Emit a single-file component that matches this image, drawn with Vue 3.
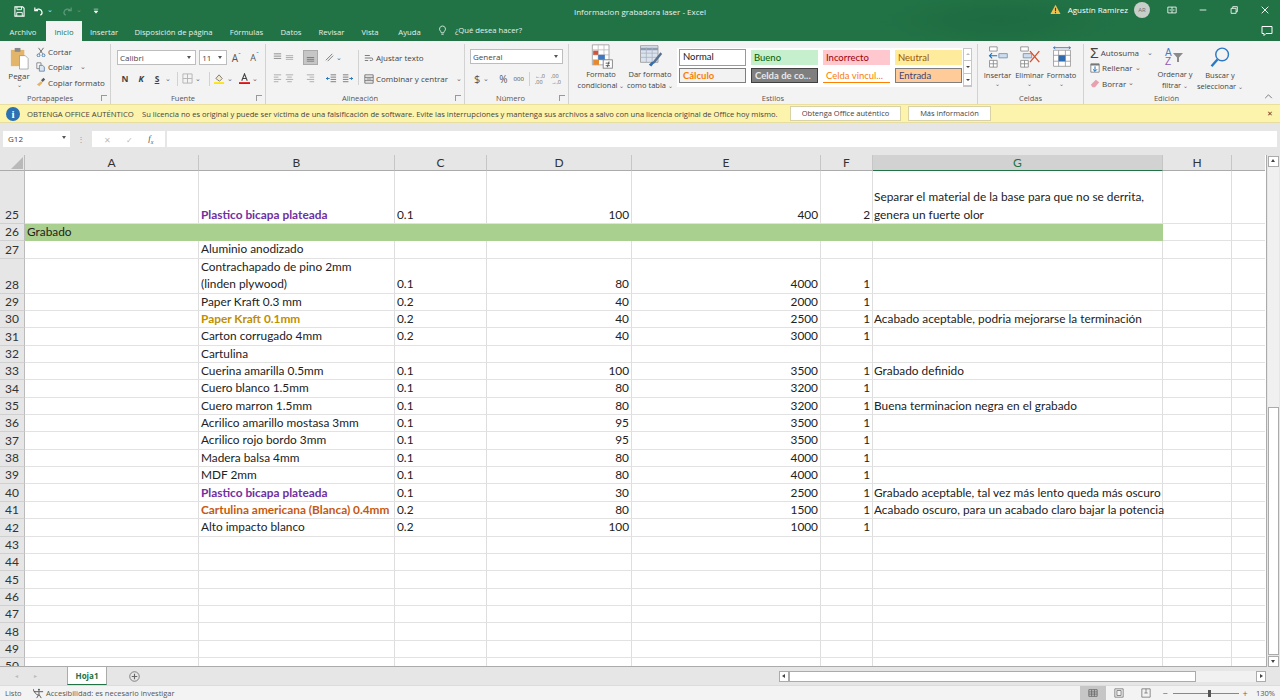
<template>
  <div class="app">
    <div class="titlebar">
      <div class="qat">
        <svg class="ic save" viewBox="0 0 12 12"><path d="M1 1h8.500L11 2.500V11H1z" fill="none" stroke="#fff" stroke-width="1.200"/><path d="M3.200 1v3h5V1M3 11V7h6v4" fill="none" stroke="#fff"/></svg>
        <svg class="ic undo" viewBox="0 0 12 12"><path d="M2 1.500v3.500h3.500M2.300 5C4.500 2.500 9 3 9.800 6.500c.3 1.500-.5 3-1.800 3.500" fill="none" stroke="#fff" stroke-width="1.300"/></svg>
        <span class="caret white">⌄</span>
        <svg class="ic redo" viewBox="0 0 12 12"><path d="M10 1.500v3.500H6.500M9.700 5C7.500 2.500 3 3 2.200 6.500c-.3 1.500.5 3 1.800 3.500" fill="none" stroke="#5d9a7a" stroke-width="1.300"/></svg>
        <span class="caret dim">⌄</span>
        <svg class="ic custom" viewBox="0 0 8 8"><path d="M1 1.500h6M1.500 4h5L4 7z" fill="#fff" stroke="#fff" stroke-width=".7"/></svg>
      </div>
      <div class="doc-title">Informacion grabadora laser  -  Excel</div>
      <div class="account">
        <svg class="warn" viewBox="0 0 12 12"><path d="M6 .8 11.500 11H.5z" fill="#f3c04a"/><path d="M5.400 4h1.200v4H5.400zM5.400 8.800h1.200v1.200H5.400z" fill="#3a3a3a"/></svg>
        <span class="user">Agustín Ramirez</span>
        <span class="avatar">AR</span>
        <svg class="win-ic first" viewBox="0 0 12 12"><path d="M1 2.500h10v7H1zM6 2.500v7M3 6h2M7 6h2" fill="none" stroke="#fff"/></svg>
        <svg class="win-ic" viewBox="0 0 12 12"><path d="M2 6h8" stroke="#fff"/></svg>
        <svg class="win-ic" viewBox="0 0 12 12"><path d="M2.500 4h6v6h-6zM4.500 4V2h5.500v6H8.500" fill="none" stroke="#fff"/></svg>
        <svg class="win-ic" viewBox="0 0 12 12"><path d="m2 2 8 8M10 2l-8 8" stroke="#fff" stroke-width="1.100"/></svg>
      </div>
    </div>

    <div class="tabsbar">
      <span v-for="t in tabs" :key="t.name" class="tab" :class="{ active: t.name === 'Inicio' }" :style="{ width: t.w + 'px' }">{{ t.name }}</span>
      <svg class="bulb" viewBox="0 0 12 14"><path d="M6 1a4 4 0 0 0-2.500 7.100c.6.600.7 1.200.8 2h3.400c.1-.8.2-1.400.8-2A4 4 0 0 0 6 1zM4.500 12h3" fill="none" stroke="#fff"/></svg>
      <span class="tell">¿Qué desea hacer?</span>
      <svg class="comment" viewBox="0 0 12 12"><path d="M1 1.500h10v7H5L3 10.500v-2H1z" fill="none" stroke="#fff"/></svg>
    </div>

    <div class="ribbon">
      <section class="group g-clip">
        <div class="group-body">
          <div class="big pegar">
            <svg class="paste" viewBox="0 0 20 24"><rect x="1" y="3" width="14" height="17" fill="#e3b56b"/><rect x="5" y="1" width="6" height="4" fill="#8a8a8a"/><path d="M10 9h6l3 3v11h-9z" fill="#fff" stroke="#8c8c8c" stroke-width=".7"/></svg>
            <span>Pegar</span>
            <span class="caret">⌄</span>
          </div>
          <div class="stack">
            <div class="mini"><svg viewBox="0 0 12 12"><path d="M3 1l5 7M9 1 4 8" stroke="#555" fill="none"/><circle cx="3" cy="10" r="1.700" fill="none" stroke="#3a6ea5"/><circle cx="9" cy="10" r="1.700" fill="none" stroke="#3a6ea5"/></svg>Cortar</div>
            <div class="mini"><svg viewBox="0 0 12 12"><path d="M1 1h5v7H1z" fill="#fff" stroke="#777"/><path d="M4 4h4l2 2v5H4z" fill="#dce6f2" stroke="#5b7fa6"/></svg>Copiar <span class="caret gap">⌄</span></div>
            <div class="mini"><svg viewBox="0 0 12 12"><path d="m1 9 5-4 2 2-4 4z" fill="#e3b56b"/><path d="m6 4 3-3 2 2-3 3z" fill="#5b5b5b"/></svg>Copiar formato</div>
          </div>
        </div>
        <div class="group-label">Portapapeles<i class="launch"></i></div>
      </section>

      <section class="group g-font">
        <div class="group-body col">
          <div class="row1">
            <div class="combo font-name">Calibri<b class="arrow"></b></div>
            <div class="combo font-size">11<b class="arrow"></b></div>
            <span class="grow-a">A<sup>ˆ</sup></span>
            <span class="grow-a small">A<sup>ˇ</sup></span>
          </div>
          <div class="row2 fontrow">
            <b class="fmt">N</b>
            <b class="fmt it">K</b>
            <b class="fmt un">S</b>
            <span class="caret">⌄</span>
            <i class="vsep first"></i>
            <svg class="i14 faded" viewBox="0 0 12 12"><path d="M1 1h10v10H1zM6 1v10M1 6h10" fill="none" stroke="#999"/></svg>
            <span class="caret">⌄</span>
            <i class="vsep second"></i>
            <svg class="i14" viewBox="0 0 12 12"><path d="m2 6 3.500-4L9 6l-3 3z" fill="#f5e9c8" stroke="#777"/><rect x="0" y="10" width="11" height="2" fill="#ffe600"/></svg>
            <span class="caret">⌄</span>
            <svg class="i14 fcolor" viewBox="0 0 12 12"><path d="M3 8.500 6 1l3 7.500M4.100 6h3.800" fill="none" stroke="#444" stroke-width="1.200"/><rect x="0" y="10" width="12" height="2" fill="#e01010"/></svg>
            <span class="caret">⌄</span>
          </div>
        </div>
        <div class="group-label">Fuente<i class="launch"></i></div>
      </section>

      <section class="group g-align">
        <div class="group-body">
          <div class="col align-icons">
            <div class="row1 tight">
              <svg class="i12" viewBox="0 0 12 12"><path d="M2 2h8M2 4.500h8M2 7h8" stroke="#888"/></svg>
              <svg class="i12" viewBox="0 0 12 12"><path d="M2 4h8M2 6h8M2 8h8" stroke="#aaa"/></svg>
              <span class="selected"><svg class="i12" viewBox="0 0 12 12"><path d="M2 6h8M2 8h8M2 10h8" stroke="#777"/></svg></span>
              <svg class="i12 orient" viewBox="0 0 12 12"><path d="m2 9 7-7M4 10l6-6" stroke="#777" fill="none"/></svg>
              <span class="caret">⌄</span>
            </div>
            <div class="row2 tight">
              <svg class="i12" viewBox="0 0 12 12"><path d="M2 2h8M2 4.500h5M2 7h8M2 9.500h5" stroke="#aaa"/></svg>
              <svg class="i12" viewBox="0 0 12 12"><path d="M2 2h8M3.500 4.500h5M2 7h8M3.500 9.500h5" stroke="#aaa"/></svg>
              <svg class="i12 a3" viewBox="0 0 12 12"><path d="M2 2h8M5 4.500h5M2 7h8M5 9.500h5" stroke="#aaa"/></svg>
              <svg class="i12 a4" viewBox="0 0 12 12"><path d="M5 2h6M5 4.500h6M5 7h6M5 9.500h6" stroke="#777"/><path d="M4 6H0m2-1.500L.5 6 2 7.500" stroke="#1f6fb5" fill="none"/></svg>
              <svg class="i12 a5" viewBox="0 0 12 12"><path d="M1 2h6M1 4.500h6M1 7h6M1 9.500h6" stroke="#777"/><path d="M8 6h4m-2-1.500L11.500 6 10 7.500" stroke="#1f6fb5" fill="none"/></svg>
            </div>
          </div>
          <i class="vsep tall"></i>
          <div class="col wrap-col">
            <div class="mini"><svg viewBox="0 0 12 12"><path d="M1 3h6M1 9h4M1 6h8a1.500 1.500 0 0 1 0 3H7" stroke="#666" fill="none"/></svg>Ajustar texto</div>
            <div class="mini"><svg viewBox="0 0 12 12"><path d="M1 1h10v10H1zM1 4h10M1 8h10M3 6h6" fill="none" stroke="#666"/></svg>Combinar y centrar <span class="caret gap">⌄</span></div>
          </div>
        </div>
        <div class="group-label">Alineación<i class="launch"></i></div>
      </section>

      <section class="group g-num">
        <div class="group-body col">
          <div class="combo num-format">General<b class="arrow"></b></div>
          <div class="row2 numrow">
            <span class="dollar">$</span><span class="caret">⌄</span>
            <span class="pct">%</span>
            <span class="thou">000</span>
            <i class="vsep"></i>
            <span class="dec"><em>←</em>,0<br>,00</span>
            <span class="dec">,00<br><em>→</em>,0</span>
          </div>
        </div>
        <div class="group-label num-label">Número<i class="launch"></i></div>
      </section>

      <section class="group g-styles">
        <div class="group-body">
          <div class="big cf">
            <svg class="i30" viewBox="0 0 30 30"><path d="M4 1h20v24H4z" fill="#fff" stroke="#9a9a9a"/><path d="M4 7h20M4 13h20M4 19h20M11 1v24M18 1v24" stroke="#bbb"/><rect x="5" y="8" width="6" height="5" fill="#d0533e"/><rect x="11" y="13" width="8" height="6" fill="#3f79c0"/><rect x="5" y="19" width="7" height="6" fill="#e5892e"/><rect x="17" y="19" width="11" height="10" fill="#fff" stroke="#777"/><path d="M20 23h5M20 26h5M24 21l-2 7" stroke="#444"/></svg>
            <span>Formato</span>
            <span>condicional <em class="caret">⌄</em></span>
          </div>
          <div class="big tf">
            <svg class="i30" viewBox="0 0 30 30"><path d="M3 2h21v20H3z" fill="#dbe3ee" stroke="#999"/><path d="M3 6h21" stroke="#8f9db0" stroke-width="3"/><path d="M3 11h21M3 16h21M10 4v18M17 4v18" stroke="#aab4c2"/><path d="m27 10-9 11-3 4 5-2 9-11z" fill="#59718f"/><path d="m13 25 4-4 2 2-3 4z" fill="#2f6db0"/></svg>
            <span>Dar formato</span>
            <span>como tabla <em class="caret">⌄</em></span>
          </div>
          <div class="gallery">
            <div class="cells">
              <span class="st normal">Normal</span>
              <span class="st bueno">Bueno</span>
              <span class="st incorrecto">Incorrecto</span>
              <span class="st neutral">Neutral</span>
              <span class="st calculo">Cálculo</span>
              <span class="st celda">Celda de co...</span>
              <span class="st vinc">Celda vincul...</span>
              <span class="st entrada">Entrada</span>
            </div>
            <div class="gal-scroll">
              <i class="up"></i>
              <i class="down"></i>
              <i class="more"></i>
            </div>
          </div>
        </div>
        <div class="group-label plain">Estilos</div>
      </section>

      <section class="group g-cells">
        <div class="group-body">
          <div class="big cellbtn">
            <svg class="i26" viewBox="0 0 26 26"><path d="M3 1h9v5H3zM3 17h9v8H3zM7.500 17v8M3 21h9" fill="#fff" stroke="#888"/><path d="M14 9h10v5H14z" fill="#cfdcec" stroke="#6f8fb3"/><path d="M12 11.500H3m3-3L3 11.500l3 3" fill="none" stroke="#1f6fb5" stroke-width="1.300"/></svg>
            <span>Insertar</span><em class="caret">⌄</em>
          </div>
          <div class="big cellbtn">
            <svg class="i26" viewBox="0 0 26 26"><path d="M2 1h9v5H2zM2 17h9v8H2zM6.500 17v8M2 21h9" fill="#fff" stroke="#888"/><path d="M5 9h10v5H5z" fill="#cfdcec" stroke="#6f8fb3"/><path d="m13 6 11 13M24 6 13 19" stroke="#d9512c" stroke-width="1.600"/></svg>
            <span>Eliminar</span><em class="caret">⌄</em>
          </div>
          <div class="big cellbtn">
            <svg class="i26" viewBox="0 0 26 26"><path d="M3 5h20v19H3zM3 11h20M3 18h20M9 5v19M17 5v19" fill="#fff" stroke="#999"/><rect x="9" y="11" width="8" height="7" fill="#2f6db0"/><path d="M3 2h20M3 2l2-1.500M3 2l2 1.500M23 2l-2-1.500M23 2l-2 1.500" fill="none" stroke="#2f6db0"/></svg>
            <span>Formato</span><em class="caret">⌄</em>
          </div>
        </div>
        <div class="group-label plain">Celdas</div>
      </section>

      <section class="group g-edit">
        <div class="group-body">
          <div class="stack edit-stack">
            <div class="mini"><span class="sigma">Σ</span>Autosuma <span class="caret gap">⌄</span></div>
            <div class="mini"><svg viewBox="0 0 12 12"><path d="M1 1h10v10H1z" fill="#fff" stroke="#777"/><path d="M1 1h10v2H1z" fill="#777"/><path d="M6 4v6M3.500 7.500 6 10l2.500-2.500" fill="none" stroke="#1f6fb5" stroke-width="1.200"/></svg>Rellenar <span class="caret">⌄</span></div>
            <div class="mini"><svg viewBox="0 0 12 12"><path d="m1 8 6-6 4 3-5 6H3z" fill="#e8a0b0"/></svg>Borrar <span class="caret">⌄</span></div>
          </div>
          <div class="big sortb">
            <div class="az"><span class="a">A</span><span class="z">Z</span><svg viewBox="0 0 12 12"><path d="M1 2h10L7 6.500V11H5V6.500z" fill="#8a8a8a"/></svg></div>
            <span>Ordenar y</span>
            <span>filtrar <em class="caret">⌄</em></span>
          </div>
          <div class="big findb">
            <svg class="i26" viewBox="0 0 26 26"><circle cx="15.500" cy="10" r="7.500" fill="none" stroke="#2a79c4" stroke-width="1.700"/><path d="m10 16-7 8" stroke="#2a79c4" stroke-width="2.800"/></svg>
            <span>Buscar y</span>
            <span>seleccionar <em class="caret">⌄</em></span>
          </div>
        </div>
        <div class="group-label plain">Edición</div>
      </section>

      <svg class="collapse" viewBox="0 0 10 6"><path d="m1 5 4-4 4 4" fill="none" stroke="#666"/></svg>
    </div>

    <div class="notice">
      <span class="info-ic">i</span>
      <span class="n-title">OBTENGA OFFICE AUTÉNTICO</span>
      <span class="n-msg">Su licencia no es original y puede ser víctima de una falsificación de software. Evite las interrupciones y mantenga sus archivos a salvo con una licencia original de Office hoy mismo.</span>
      <span class="n-btn b1">Obtenga Office auténtico</span>
      <span class="n-btn b2">Más información</span>
      <span class="n-close">✕</span>
    </div>

    <div class="formula">
      <div class="namebox">G12<b class="arrow"></b></div>
      <span class="dots">⋮</span>
      <div class="fx-box"><span class="fx-x">✕</span><span class="fx-c">✓</span><span class="fx-f">f<sub>x</sub></span></div>
      <div class="fx-input"></div>
    </div>

    <div class="sheet-wrap">
      <div class="sheet">
        <div class="grid" :style="gridStyle">
          <div class="corner"><i></i></div>
          <div v-for="c in cols" :key="c" class="colhead" :class="{ sel: c === 'G' }">{{ c }}</div>
          <div class="colhead blank"></div>

          <template v-for="r in rows" :key="r.n">
            <div class="rowhead">{{ r.n }}</div>
            <template v-if="r.band">
              <div class="cell band span7">{{ r.band }}</div>
              <div class="cell"></div>
              <div class="cell last"></div>
            </template>
            <template v-else>
              <div class="cell"></div>
              <div class="cell b" :class="r.cls">{{ r.b }}</div>
              <div class="cell">{{ r.c }}</div>
              <div class="cell num">{{ r.d }}</div>
              <div class="cell num">{{ r.e }}</div>
              <div class="cell num">{{ r.f }}</div>
              <div class="cell g">{{ r.g }}</div>
              <div class="cell"></div>
              <div class="cell last"></div>
            </template>
          </template>
        </div>
      </div>
      <div class="vscroll">
        <span class="sb-btn"><i class="tri up"></i></span>
        <div class="vtrack"><div class="vthumb"></div></div>
        <span class="sb-btn"><i class="tri down"></i></span>
      </div>
    </div>

    <div class="sheetbar">
      <span class="nav">◂</span><span class="nav">▸</span>
      <span class="sheet-tab">Hoja1</span>
      <svg class="plus" viewBox="0 0 12 12"><circle cx="6" cy="6" r="5.200" fill="none" stroke="#777"/><path d="M6 3v6M3 6h6" stroke="#666" stroke-width="1.200"/></svg>
      <span class="hs-btn left"><i class="tri lt"></i></span>
      <div class="hthumb"></div>
      <div class="htrack"></div>
      <span class="hs-btn"><i class="tri rt"></i></span>
    </div>

    <div class="status">
      <span class="listo">Listo</span>
      <svg class="acc" viewBox="0 0 12 12"><circle cx="6.500" cy="2" r="1.100" fill="#555"/><path d="M1 4h10M6.500 4v3L4 11M6.500 7 9 11M0 1c1 3 3 6 6 7" fill="none" stroke="#555"/></svg>
      <span class="acc-text">Accesibilidad: es necesario investigar</span>
      <div class="views">
        <span class="view on"><svg viewBox="0 0 12 12"><path d="M1 2h10v8H1zM1 4.700h10M1 7.300h10M4.300 2v8M7.700 2v8" fill="none" stroke="#666"/></svg></span>
        <span class="view"><svg viewBox="0 0 12 12"><path d="M1 1h10v10H1zM3.500 3h5v6h-5z" fill="none" stroke="#777"/></svg></span>
        <span class="view"><svg viewBox="0 0 12 12"><path d="M1 1h10v10H1zM6 1v5M4 6h4" fill="none" stroke="#777"/></svg></span>
      </div>
      <div class="zoombar">
        <span class="zs">−</span>
        <div class="slider"><i></i></div>
        <span class="zs">+</span>
        <span class="pcnt">130%</span>
      </div>
    </div>
  </div>
</template>

<script setup>
const tabs = [
  { name: 'Archivo', w: 46 },
  { name: 'Inicio', w: 36 },
  { name: 'Insertar', w: 44 },
  { name: 'Disposición de página', w: 95 },
  { name: 'Fórmulas', w: 51 },
  { name: 'Datos', w: 38 },
  { name: 'Revisar', w: 43 },
  { name: 'Vista', w: 34 },
  { name: 'Ayuda', w: 45 }
]

const cols = ['A', 'B', 'C', 'D', 'E', 'F', 'G', 'H']
const colWidths = [174, 196, 92, 145, 189, 52, 290, 69, 33]

const m = (n, b, c, d, e, f, g, cls) => ({ n, b, c, d, e, f, g, cls, h: 17.35 })

const rows = [
  { ...m(25, 'Plastico bicapa plateada', '0.1', 100, 400, 2, 'Separar el material de la base para que no se derrita,\ngenera un fuerte olor', 'purple'), h: 53 },
  { n: 26, band: 'Grabado', h: 17.35 },
  m(27, 'Aluminio anodizado'),
  { ...m(28, 'Contrachapado de pino 2mm\n(linden plywood)', '0.1', 80, 4000, 1), h: 35 },
  m(29, 'Paper Kraft 0.3 mm', '0.2', 40, 2000, 1),
  m(30, 'Paper Kraft 0.1mm', '0.2', 40, 2500, 1, 'Acabado aceptable, podria mejorarse la terminación', 'gold'),
  m(31, 'Carton corrugado 4mm', '0.2', 40, 3000, 1),
  m(32, 'Cartulina'),
  m(33, 'Cuerina amarilla 0.5mm', '0.1', 100, 3500, 1, 'Grabado definido'),
  m(34, 'Cuero blanco 1.5mm', '0.1', 80, 3200, 1),
  m(35, 'Cuero marron 1.5mm', '0.1', 80, 3200, 1, 'Buena terminacion negra en el grabado'),
  m(36, 'Acrilico amarillo mostasa 3mm', '0.1', 95, 3500, 1),
  m(37, 'Acrilico rojo bordo 3mm', '0.1', 95, 3500, 1),
  m(38, 'Madera balsa 4mm', '0.1', 80, 4000, 1),
  m(39, 'MDF 2mm', '0.1', 80, 4000, 1),
  m(40, 'Plastico bicapa plateada', '0.1', 30, 2500, 1, 'Grabado aceptable, tal vez más lento queda más oscuro', 'purple'),
  m(41, 'Cartulina americana (Blanca) 0.4mm', '0.2', 80, 1500, 1, 'Acabado oscuro, para un acabado claro bajar la potencia', 'orange'),
  m(42, 'Alto impacto blanco', '0.2', 100, 1000, 1),
  ...[43, 44, 45, 46, 47, 48, 49, 50].map((n) => m(n))
]

const gridStyle = {
  gridTemplateColumns: `25px ${colWidths.map((w) => w + 'px').join(' ')}`,
  gridTemplateRows: `16px ${rows.map((r) => r.h + 'px').join(' ')}`
}
</script>

<style scoped>
.app {
  width: 1280px;
  height: 700px;
  overflow: hidden;
  display: flex;
  flex-direction: column;
  background: #e6e6e6;
  font-family: "Open Sans", "Liberation Sans", sans-serif;
  font-size: 8px;
  color: #444;
}
svg {
  display: block;
  flex-shrink: 0;
}
em {
  font-style: normal;
}

/* title */
.titlebar {
  height: 21px;
  background: radial-gradient(ellipse 130px 30px at 1000px 21px, #1e6b41, #217346);
  color: #fff;
  display: flex;
  align-items: center;
  position: relative;
}
.qat {
  display: flex;
  align-items: center;
  padding: 2px 0 0 14px;
}
.ic {
  width: 11px;
  height: 11px;
}
.undo {
  margin-left: 8px;
}
.redo {
  margin-left: 9px;
}
.custom {
  width: 6px;
  height: 6px;
  margin-left: 11px;
}
.caret {
  font-size: 7px;
  line-height: 6px;
  color: #666;
}
.caret.white {
  color: #d6e6dd;
  margin-left: 3px;
  margin-top: -3px;
}
.caret.dim {
  color: #5d9a7a;
  margin-left: 3px;
  margin-top: -3px;
}
.doc-title {
  position: absolute;
  left: 0;
  right: 0;
  top: 6px;
  text-align: center;
  font-size: 8px;
  line-height: 12px;
  white-space: pre;
  color: #e9f1ec;
}
.account {
  margin-left: auto;
  margin-top: -1px;
  display: flex;
  align-items: center;
  position: relative;
}
.warn {
  width: 11px;
  height: 11px;
}
.user {
  margin-left: 7px;
  font-size: 8px;
}
.avatar {
  width: 16px;
  height: 16px;
  border-radius: 50%;
  background: #c8cfca;
  color: #6b6f6c;
  font-size: 6px;
  text-align: center;
  line-height: 16px;
  margin-left: 6px;
}
.win-ic {
  width: 10px;
  height: 10px;
  margin-right: 21px;
}
.win-ic.first {
  margin-left: 17px;
}
.win-ic:last-child {
  margin-right: 10px;
}

/* tabs */
.tabsbar {
  height: 21px;
  background: radial-gradient(ellipse 130px 30px at 1000px 0, #1e6b41, #217346);
  display: flex;
  align-items: flex-end;
}
.tab {
  height: 20px;
  line-height: 22px;
  text-align: center;
  color: #e4efe9;
  font-size: 7.700px;
  flex-shrink: 0;
}
.tab.active {
  background: #f3f3f3;
  color: #217346;
}
.bulb {
  width: 9px;
  height: 11px;
  margin: 0 0 5px 6px;
}
.tell {
  color: #e4efe9;
  font-size: 7.700px;
  line-height: 22px;
  margin-left: 8px;
}
.comment {
  width: 12px;
  height: 12px;
  margin: 0 7px 4px auto;
}

/* ribbon */
.ribbon {
  height: 63px;
  background: #f3f3f3;
  display: flex;
  position: relative;
  flex-shrink: 0;
}
.group {
  display: flex;
  flex-direction: column;
  border-right: 1px solid #d2d2d2;
  margin-top: 3px;
  box-sizing: border-box;
  flex-shrink: 0;
}
.group-body {
  flex: 1;
  display: flex;
  min-height: 0;
}
.col {
  display: flex;
  flex-direction: column;
}
.group-label {
  height: 12px;
  line-height: 12px;
  text-align: center;
  font-size: 7.500px;
  color: #555;
  position: relative;
  padding-right: 10px;
}
.group-label.plain {
  padding-right: 0;
}
.group-label.num-label {
  padding-right: 12px;
}
.launch {
  position: absolute;
  right: 3px;
  top: 3px;
  width: 5px;
  height: 5px;
  border: 1px solid #999;
  border-width: 1px 0 0 1px;
}
.g-clip {
  width: 111px;
}
.g-font {
  width: 155px;
}
.g-align {
  width: 199px;
}
.g-num {
  width: 104px;
}
.g-styles {
  width: 409px;
}
.g-cells {
  width: 106px;
}
.g-edit {
  width: 165px;
  border-right: 0;
}
.big {
  display: flex;
  flex-direction: column;
  align-items: center;
  font-size: 7.500px;
  line-height: 10.500px;
  color: #444;
  text-align: center;
  white-space: nowrap;
}
.pegar {
  width: 34px;
  margin-left: 2px;
  font-size: 8px;
}
.paste {
  width: 21px;
  height: 23px;
  margin: 3px 0 1px;
}
.stack {
  display: flex;
  flex-direction: column;
  gap: 0;
  margin-left: 0;
}
.mini {
  height: 15.300px;
  display: flex;
  align-items: center;
  gap: 2px;
  white-space: nowrap;
  font-size: 8px;
  color: #444;
}
.mini svg {
  width: 10px;
  height: 10px;
}
.gap {
  margin-left: 6px;
}
.combo {
  background: #fff;
  border: 1px solid #bdbdbd;
  height: 15px;
  line-height: 13px;
  padding-left: 2px;
  position: relative;
  font-size: 8px;
  box-sizing: border-box;
  color: #444;
}
.arrow {
  position: absolute;
  right: 4px;
  top: 5px;
  border: 2.500px solid transparent;
  border-top: 3px solid #555;
}
.row1 {
  display: flex;
  align-items: center;
  height: 17px;
}
.row2 {
  display: flex;
  align-items: center;
  height: 17px;
  margin-top: 4px;
}
.g-font .group-body {
  padding: 5px 0 0 6px;
}
.font-name {
  width: 81px;
}
.font-size {
  width: 28px;
  margin-left: 3px;
}
.grow-a {
  font-size: 10px;
  margin-left: 5px;
  width: 15px;
  color: #555;
}
.grow-a sup {
  color: #2a79c4;
  font-size: 7px;
  line-height: 0;
}
.grow-a.small {
  font-size: 9px;
  margin-left: 4px;
}
.fontrow {
  padding-left: 0;
}
.fmt {
  width: 16px;
  font-size: 8.500px;
  text-align: center;
  color: #444;
}
.fmt.it {
  font-style: italic;
}
.fmt.un {
  text-decoration: underline;
}
.vsep {
  width: 1px;
  height: 14px;
  background: #d2d2d2;
  margin: 0 4px;
  flex-shrink: 0;
}
.vsep.first {
  margin-left: 6px;
}
.vsep.second {
  margin-left: 8px;
}
.i14 {
  width: 11px;
  height: 11px;
  margin-right: 2px;
}
.faded {
  opacity: 0.7;
}
.fcolor {
  margin-left: 6px;
}
.g-align .group-body {
  padding: 5px 0 0 6px;
}
.align-icons {
  width: 86px;
}
.tight {
  gap: 1px;
}
.i12 {
  width: 11px;
  height: 11px;
}
.selected {
  background: #c6c6c6;
  border: 1px solid #aaa;
  padding: 1px;
  margin-left: 7px;
}
.orient {
  margin-left: 5px;
}
.a3 {
  margin-left: 9px;
}
.a4 {
  margin-left: 9px;
}
.a5 {
  margin-left: 4px;
}
.vsep.tall {
  height: 35px;
  margin: 1px 5px 0 0;
}
.wrap-col {
  padding-top: 0;
}
.wrap-col .mini {
  height: 17px;
}
.wrap-col .mini + .mini {
  margin-top: 4px;
}
.g-num .group-body {
  padding: 5px 0 0 5px;
}
.num-format {
  width: 93px;
  flex-shrink: 0;
}
.numrow {
  padding-left: 4px;
  margin-top: 6px;
  gap: 3px;
}
.dollar {
  font-size: 11px;
  color: #555;
}
.pct {
  font-size: 10px;
  color: #555;
  margin-left: 7px;
}
.thou {
  font-size: 6px;
  margin-left: 3px;
}
.numrow .vsep {
  margin: 0 2px;
}
.dec {
  font-size: 5.500px;
  line-height: 6px;
  width: 13px;
  color: #666;
}
.dec em {
  color: #1f6fb5;
}
.i30 {
  width: 25px;
  height: 25px;
}
.cf {
  width: 50px;
  margin-left: 7px;
}
.tf {
  width: 48px;
}
.gallery {
  display: flex;
  margin: 4px 0 0 3px;
  background: #fff;
  height: 39px;
  width: 295px;
}
.cells {
  display: grid;
  grid-template-columns: repeat(4, 67px);
  grid-template-rows: 15px 15px;
  gap: 3px 5px;
  padding: 2px;
  width: 286px;
  box-sizing: border-box;
}
.st {
  font-family: Lato, "Liberation Sans", sans-serif;
  font-size: 9.500px;
  line-height: 15px;
  padding-left: 3px;
  overflow: hidden;
  white-space: nowrap;
}
.normal {
  border: 1.500px solid #9a9a9a;
  line-height: 14px;
  color: #222;
  margin: -1px 0;
}
.bueno {
  background: #c6efce;
  color: #006100;
}
.incorrecto {
  background: #ffc7ce;
  color: #9c0006;
}
.neutral {
  background: #ffeb9c;
  color: #9c5700;
}
.calculo {
  background: #f2f2f2;
  border: 1px solid #7f7f7f;
  color: #fa7d00;
  font-weight: 700;
  line-height: 13px;
}
.celda {
  background: #7f7f7f;
  border: 1px solid #3f3f3f;
  color: #e8e8e8;
  font-weight: 700;
  line-height: 13px;
}
.vinc {
  color: #fa7d00;
  border-bottom: 1.500px solid #ff8001;
}
.entrada {
  background: #ffcc99;
  border: 1px solid #7f7f7f;
  color: #3f3f76;
  line-height: 13px;
}
.gal-scroll {
  width: 9px;
  display: flex;
  flex-direction: column;
  border: 1px solid #c6c6c6;
  box-sizing: border-box;
  margin-left: 0;
}
.gal-scroll i {
  flex: 1;
  border-bottom: 1px solid #c6c6c6;
  position: relative;
}
.gal-scroll i::after {
  content: "";
  position: absolute;
  left: 2px;
  top: 5px;
  border: 2px solid transparent;
}
.gal-scroll .up::after {
  border-bottom: 2.500px solid #bbb;
  top: 2px;
}
.gal-scroll .down::after {
  border-top: 2.500px solid #444;
}
.gal-scroll .more::after {
  border-top: 2.500px solid #444;
}
.cellbtn {
  width: 31px;
  line-height: 11px;
}
.g-cells .group-body {
  padding: 2px 0 0 4px;
  gap: 1px;
}
.i26 {
  width: 22px;
  height: 22px;
  margin-bottom: 2px;
}
.cellbtn .caret,
.big .caret {
  font-size: 6px;
  color: #666;
}
.g-edit .group-body {
  padding: 0 0 0 6px;
}
.edit-stack {
  width: 63px;
  margin-top: 1px;
}
.sigma {
  font-size: 14px;
  width: 10px;
  color: #444;
  font-family: "Liberation Sans", sans-serif;
  line-height: 10px;
}
.sortb {
  width: 44px;
  padding-top: 2px;
}
.az {
  width: 24px;
  height: 20px;
  flex-shrink: 0;
  position: relative;
  margin-bottom: 3px;
  font-family: "Liberation Sans", sans-serif;
  font-size: 10px;
  line-height: 11px;
  font-weight: 400;
  text-align: left;
}
.az .a {
  position: absolute;
  left: 2px;
  top: 1px;
  color: #4b7bc2;
}
.az .z {
  position: absolute;
  left: 2px;
  top: 10px;
  color: #8d5cb5;
}
.az svg {
  position: absolute;
  left: 9px;
  top: 5px;
  width: 12px;
  height: 12px;
}
.findb {
  width: 46px;
  padding-top: 2px;
}
.collapse {
  position: absolute;
  right: 7px;
  bottom: 5px;
  width: 9px;
  height: 5px;
}

/* notice */
.notice {
  height: 19px;
  background: #fcf3ac;
  border-top: 1px solid #eadf9c;
  border-bottom: 1px solid #e6dda0;
  box-sizing: border-box;
  display: flex;
  align-items: center;
  position: relative;
  flex-shrink: 0;
  font-size: 7.600px;
  color: #444;
  white-space: nowrap;
}
.info-ic {
  width: 14px;
  height: 14px;
  border-radius: 50%;
  background: #2b71b3;
  color: #fff;
  font-family: "Liberation Serif", serif;
  font-weight: 700;
  font-size: 11px;
  line-height: 14px;
  text-align: center;
  margin-left: 6px;
}
.n-title {
  margin-left: 7px;
  width: 115px;
  font-size: 7.700px;
}
.n-msg {
  width: 648px;
  overflow: hidden;
}
.n-btn {
  background: #fff;
  border: 1px solid #d9d2a4;
  height: 15px;
  line-height: 13px;
  text-align: center;
  box-sizing: border-box;
  font-size: 7.500px;
}
.b1 {
  width: 111px;
}
.b2 {
  width: 83px;
  margin-left: 7px;
}
.n-close {
  margin-left: auto;
  margin-right: 7px;
  font-size: 7px;
}

/* formula */
.formula {
  height: 32px;
  display: flex;
  align-items: flex-start;
  padding-top: 8px;
  box-sizing: border-box;
  background: #e6e6e6;
  flex-shrink: 0;
}
.namebox {
  width: 67px;
  height: 16px;
  margin-left: 3px;
  background: #fff;
  position: relative;
  line-height: 16px;
  padding-left: 5px;
  box-sizing: border-box;
  font-size: 8px;
  color: #444;
}
.dots {
  width: 22px;
  text-align: center;
  line-height: 16px;
  color: #999;
}
.fx-box {
  width: 73px;
  height: 16px;
  background: #fff;
  display: flex;
  align-items: center;
  justify-content: space-around;
  padding: 0 4px;
  box-sizing: border-box;
  color: #bbb;
  font-size: 8px;
}
.fx-f {
  font-family: "Liberation Serif", serif;
  font-style: italic;
  color: #555;
  font-size: 9px;
}
.fx-f sub {
  font-size: 6px;
}
.fx-input {
  width: 1110px;
  height: 16px;
  margin-left: 2px;
  background: #fff;
}

/* sheet */
.sheet-wrap {
  height: 512px;
  display: flex;
  flex-shrink: 0;
  background: #e6e6e6;
}
.sheet {
  width: 1267px;
  height: 512px;
  overflow: hidden;
  background: #fff;
  border-bottom: 1px solid #ababab;
  border-right: 1px solid #ababab;
  box-sizing: border-box;
}
.grid {
  display: grid;
  font-family: Lato, "Liberation Sans", sans-serif;
  font-size: 11.850px;
  color: #222;
}
.corner {
  background: #e6e6e6;
  position: relative;
  border-right: 1px solid #bbb;
  border-bottom: 1px solid #ababab;
  box-sizing: border-box;
}
.corner i {
  position: absolute;
  right: 1px;
  bottom: 1px;
  border: 6px solid transparent;
  border-right-color: #b9b9b9;
  border-bottom-color: #b9b9b9;
}
.colhead {
  background: #e6e6e6;
  border-right: 1px solid #c6c6c6;
  border-bottom: 1px solid #ababab;
  box-sizing: border-box;
  text-align: center;
  line-height: 15px;
  font-size: 12px;
  color: #333;
}
.colhead.sel {
  background: #d2d2d2;
  border-bottom: 1px solid #217346;
  color: #217346;
}
.colhead.blank {
  border-right: 0;
}
.rowhead {
  background: #e6e6e6;
  border-right: 1px solid #bbb;
  border-bottom: 1px solid #d0d0d0;
  box-sizing: border-box;
  display: flex;
  align-items: flex-end;
  justify-content: center;
  line-height: 16px;
  font-size: 12px;
  color: #333;
}
.cell {
  border-right: 1px solid #dedede;
  border-bottom: 1px solid #e2e2e2;
  box-sizing: border-box;
  padding: 0 2px;
  display: flex;
  align-items: flex-end;
  line-height: 17.300px;
  white-space: pre;
  min-width: 0;
}
.cell.g {
  padding-left: 1px;
}
.cell.num {
  justify-content: flex-end;
}
.cell.last {
  border-right: 0;
}
.band {
  background: #a9d08e;
  border-color: #a9d08e;
  grid-column: span 7;
}
.purple,
.gold,
.orange {
  font-weight: 700;
}
.purple {
  color: #7030a0;
}
.gold {
  color: #bf8f00;
}
.orange {
  color: #c65911;
}
.vscroll {
  width: 13px;
  display: flex;
  flex-direction: column;
  align-items: center;
  box-sizing: border-box;
  padding: 0 1px 0 1px;
}
.sb-btn {
  width: 11px;
  height: 11px;
  background: #fff;
  border: 1px solid #ababab;
  box-sizing: border-box;
  position: relative;
  flex-shrink: 0;
  margin-top: 1px;
}
.tri {
  position: absolute;
  border: 2.500px solid transparent;
}
.tri.up {
  left: 2px;
  top: 0;
  border-bottom: 3px solid #444;
}
.tri.down {
  left: 2px;
  top: 3px;
  border-top: 3px solid #444;
}
.tri.lt {
  left: 0;
  top: 2px;
  border-right: 3px solid #444;
}
.tri.rt {
  left: 3px;
  top: 2px;
  border-left: 3px solid #444;
}
.vtrack {
  flex: 1;
  width: 100%;
  padding-top: 240px;
  box-sizing: border-box;
  background: #f0f0f0;
}
.vthumb {
  height: 100%;
  background: #fff;
  border: 1px solid #ababab;
  box-sizing: border-box;
}

/* tabs at bottom */
.sheetbar {
  height: 18px;
  display: flex;
  align-items: center;
  background: #e6e6e6;
  flex-shrink: 0;
  position: relative;
}
.nav {
  width: 19px;
  text-align: center;
  color: #bbb;
  font-size: 6px;
  margin-left: 7px;
}
.nav + .nav {
  margin-left: 0;
}
.sheet-tab {
  margin-left: 22px;
  width: 40px;
  height: 18px;
  box-sizing: border-box;
  background: #fff;
  border-bottom: 1px solid #217346;
  border-right: 1px solid #ababab;
  border-left: 1px solid #ababab;
  color: #217346;
  font-weight: 700;
  font-size: 8px;
  text-align: center;
  line-height: 17px;
  margin-top: -1px;
}
.plus {
  width: 11px;
  height: 11px;
  margin-left: 22px;
}
.hs-btn {
  width: 10px;
  height: 11px;
  position: relative;
  background: #fff;
  border: 1px solid #ababab;
  box-sizing: border-box;
  flex-shrink: 0;
}
.hs-btn.left {
  margin-left: 639px;
}
.hthumb {
  width: 407px;
  height: 11px;
  background: #fff;
  border: 1px solid #ababab;
  box-sizing: border-box;
}
.htrack {
  width: 60px;
  height: 11px;
  background: #f1f1f1;
}

/* status */
.status {
  height: 15px;
  background: #f3f3f3;
  display: flex;
  align-items: center;
  flex-shrink: 0;
  font-size: 7.500px;
  color: #555;
  border-top: 1px solid #dcdcdc;
  box-sizing: border-box;
}
.listo {
  margin-left: 5px;
  width: 28px;
}
.acc {
  width: 11px;
  height: 11px;
}
.acc-text {
  margin-left: 2px;
}
.views {
  display: flex;
  margin-left: auto;
}
.view {
  width: 26.500px;
  height: 14px;
  display: flex;
  align-items: center;
  justify-content: center;
}
.view.on {
  background: #c6c6c6;
}
.view svg {
  width: 10px;
  height: 10px;
}
.zoombar {
  display: flex;
  align-items: center;
  margin-left: 2px;
  margin-right: 5px;
}
.zs {
  font-size: 9px;
  width: 8px;
  text-align: center;
  color: #666;
}
.slider {
  width: 66px;
  height: 1px;
  background: #888;
  margin: 0 2px 0 4px;
  position: relative;
}
.slider i {
  position: absolute;
  left: 35px;
  top: -3px;
  width: 3px;
  height: 7px;
  background: #555;
}
.pcnt {
  margin-left: 7px;
  width: 19px;
  font-size: 7.500px;
}
</style>

<style>
html,
body {
  margin: 0;
  background: #e6e6e6;
}
</style>
